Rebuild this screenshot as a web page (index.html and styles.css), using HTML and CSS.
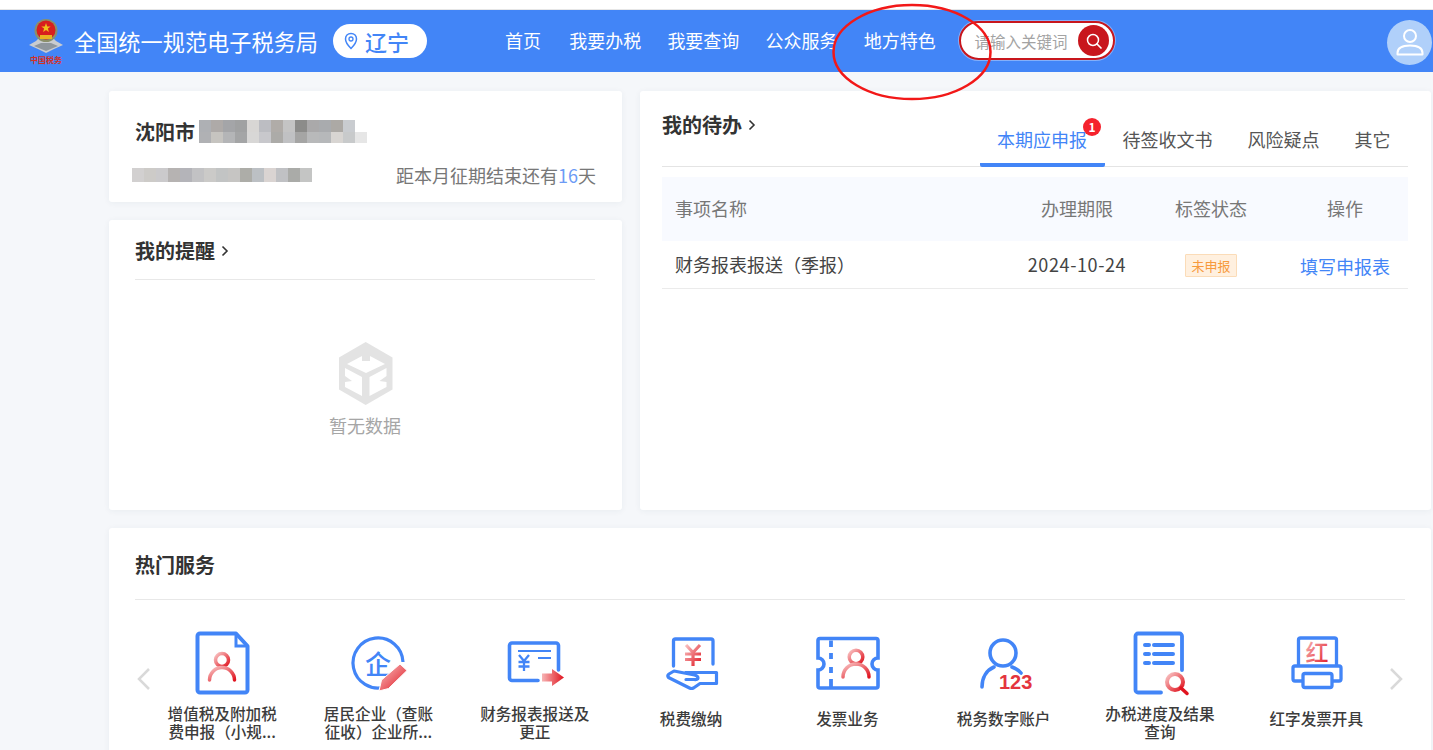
FILE: index.html
```html
<!DOCTYPE html>
<html lang="zh-CN">
<head>
<meta charset="utf-8">
<title>全国统一规范电子税务局</title>
<link rel="stylesheet" href="styles.css">
</head>
<body>
<svg class="defs" width="0" height="0" aria-hidden="true">
  <defs>
    <linearGradient id="rg" x1="0" y1="0" x2="1" y2="1">
      <stop offset="0" stop-color="#f9c5c5"/>
      <stop offset="1" stop-color="#e0141f"/>
    </linearGradient>
    <linearGradient id="rh" x1="0" y1="0" x2="1" y2="0">
      <stop offset="0" stop-color="#f7b5b5"/>
      <stop offset="1" stop-color="#e0141f"/>
    </linearGradient>
  </defs>
</svg>
<div class="topstrip"></div>
<header class="header">
  <div class="brand">
    <svg class="logo" width="40" height="50" viewBox="0 0 40 50">
      <path d="M3 28 L10 24 L14 20 H26 L30 24 L37 28 L28 32 L20 36 L12 32Z" fill="#c9ccd0"/>
      <path d="M8 29 L15 26 H25 L32 29 L20 34Z" fill="#8f969c"/>
      <circle cx="20" cy="13.500" r="11.500" fill="#8b8f6a"/>
      <circle cx="20" cy="13" r="9.500" fill="#d81e1e"/>
      <path d="M20 6 l1.200 3.400 h3.500 l-2.800 2.100 1 3.400 -2.900 -2 -2.900 2 1 -3.400 -2.800 -2.100 h3.500z" fill="#f1c21b"/>
      <rect x="14" y="18" width="12" height="4" fill="#e9b322"/>
      <text class="logo-text" x="20" y="46" text-anchor="middle">中国税务</text>
    </svg>
    <span class="site-name">全国统一规范电子税务局</span>
    <span class="region">
      <svg width="14" height="18" viewBox="0 0 14 18"><path d="M7 1.500 C3.600 1.500 1.500 4 1.500 7 C1.500 10.500 5 14.500 7 16.500 C9 14.500 12.500 10.500 12.500 7 C12.500 4 10.400 1.500 7 1.500Z" fill="none" stroke="#4285f7" stroke-width="1.500"/><circle cx="7" cy="7" r="2" fill="none" stroke="#4285f7" stroke-width="1.300"/></svg>
      <span>辽宁</span>
    </span>
  </div>
  <nav class="nav">
    <a>首页</a><a>我要办税</a><a>我要查询</a><a>公众服务</a><a>地方特色</a>
  </nav>
  <div class="search">
    <span class="placeholder">请输入关键词</span>
    <span class="search-btn">
      <svg width="20" height="20" viewBox="0 0 20 20"><circle cx="9" cy="9" r="5.500" fill="none" stroke="#fff" stroke-width="1.500"/><path d="M13 13 L17 17" stroke="#fff" stroke-width="1.700" stroke-linecap="round"/></svg>
    </span>
  </div>
  <span class="avatar">
    <svg width="30" height="32" viewBox="0 0 30 32"><circle cx="15" cy="10" r="6" fill="none" stroke="#fff" stroke-width="2"/><path d="M2.500 27 C2.500 21 9 19.500 15 19.500 C21 19.500 27.500 21 27.500 27 V28.500 H2.500Z" fill="none" stroke="#fff" stroke-width="2" stroke-linejoin="round"/></svg>
  </span>
</header>

<svg class="circle-mark" width="170" height="110" viewBox="0 0 170 110"><ellipse cx="83" cy="52" rx="78.500" ry="47" fill="none" stroke="#f21818" stroke-width="2.500"/></svg>

<main class="main">
  <div class="upper">
    <div class="left-col">
      <section class="card company">
        <div class="company-name">
          <span>沈阳市</span>
          <svg class="mosaic mosaic-name" width="184" height="24" viewBox="0 0 184 24">
            <rect x="0" y="0" width="12" height="12" fill="#aeb0b4"/><rect x="12" y="0" width="12" height="12" fill="#aeaaa8"/><rect x="24" y="0" width="12" height="12" fill="#a4a5a8"/><rect x="36" y="0" width="12" height="12" fill="#a0a1a2"/><rect x="48" y="0" width="12" height="12" fill="#d8d6d4"/><rect x="60" y="0" width="12" height="12" fill="#bcbdc2"/><rect x="72" y="0" width="12" height="12" fill="#b0aca8"/><rect x="84" y="0" width="12" height="12" fill="#c4c4c4"/><rect x="96" y="0" width="12" height="12" fill="#8c8c8a"/><rect x="108" y="0" width="12" height="12" fill="#aaa9aa"/><rect x="120" y="0" width="12" height="12" fill="#a9abae"/><rect x="132" y="0" width="12" height="12" fill="#aca9a5"/><rect x="144" y="0" width="12" height="12" fill="#c9ccd0"/>
            <rect x="0" y="12" width="12" height="11" fill="#b0b1b4"/><rect x="12" y="12" width="12" height="11" fill="#c6c4c0"/><rect x="24" y="12" width="12" height="11" fill="#b4b5b7"/><rect x="36" y="12" width="12" height="11" fill="#a4a5a6"/><rect x="48" y="12" width="12" height="11" fill="#d8d7d6"/><rect x="60" y="12" width="12" height="11" fill="#c8c8cc"/><rect x="72" y="12" width="12" height="11" fill="#acaba8"/><rect x="84" y="12" width="12" height="11" fill="#c0c1c3"/><rect x="96" y="12" width="12" height="11" fill="#a5a5a4"/><rect x="108" y="12" width="12" height="11" fill="#b8b9ba"/><rect x="120" y="12" width="12" height="11" fill="#b6b8ba"/><rect x="132" y="12" width="12" height="11" fill="#d8d5d2"/><rect x="144" y="12" width="12" height="11" fill="#c8cacb"/><rect x="156" y="12" width="12" height="11" fill="#e6e6e6"/>
          </svg>
        </div>
        <div class="company-sub">
          <svg class="mosaic" width="182" height="20" viewBox="0 0 182 20">
            <rect x="0" y="3" width="12" height="14" fill="#d2d0d0"/><rect x="12" y="3" width="12" height="14" fill="#cdcbc8"/><rect x="24" y="3" width="12" height="14" fill="#cbcacc"/><rect x="36" y="3" width="12" height="14" fill="#b6b3b2"/><rect x="48" y="3" width="12" height="14" fill="#b4b4b9"/><rect x="60" y="3" width="12" height="14" fill="#c2c2c4"/><rect x="72" y="3" width="12" height="14" fill="#cbcac8"/><rect x="84" y="3" width="12" height="14" fill="#c2c4c4"/><rect x="96" y="3" width="12" height="14" fill="#c6c5c3"/><rect x="108" y="3" width="12" height="14" fill="#adada8"/><rect x="120" y="3" width="12" height="14" fill="#bcc0c4"/><rect x="132" y="3" width="12" height="14" fill="#dad4d2"/><rect x="144" y="3" width="12" height="14" fill="#c0c1c4"/><rect x="156" y="3" width="12" height="14" fill="#aaaba8"/><rect x="168" y="3" width="12" height="14" fill="#c4c5c4"/>
          </svg>
          <span class="deadline">距本月征期结束还有<em>16</em>天</span>
        </div>
      </section>
      <section class="card reminder">
        <h2 class="title title-line">我的提醒<svg class="chev" width="10" height="14" viewBox="0 0 10 14"><path d="M2.500 2.500 L7 7 L2.500 11.500" fill="none" stroke="#333" stroke-width="1.600"/></svg></h2>
        <div class="empty">
          <svg width="56" height="64" viewBox="0 0 56 64">
            <path d="M28.700 0 L55.500 15.500 V47.500 L28.700 63 L2 47.500 V15.500Z" fill="#e3e3e3"/>
            <path d="M10 22 L25 14 V19 H33 V14 L48 22 L29 31Z" fill="#fff"/>
            <path d="M8 26 L25 35 V54 L8 45 V40 L15 39 L8 34Z" fill="#fff"/>
            <path d="M49.500 26 L32.500 35 V54 L49.500 45 V40 L42.500 39 L49.500 34Z" fill="#fff"/>
          </svg>
          <p>暂无数据</p>
        </div>
      </section>
    </div>
    <section class="card todo">
      <div class="todo-head">
        <h2 class="title">我的待办<svg class="chev" width="10" height="14" viewBox="0 0 10 14"><path d="M2.500 2.500 L7 7 L2.500 11.500" fill="none" stroke="#333" stroke-width="1.600"/></svg></h2>
        <div class="tabs">
          <span class="tab active">本期应申报<i class="badge">1</i></span>
          <span class="tab">待签收文书</span>
          <span class="tab">风险疑点</span>
          <span class="tab">其它</span>
        </div>
      </div>
      <div class="table">
        <div class="tr th"><span>事项名称</span><span class="c">办理期限</span><span class="c">标签状态</span><span class="c c-op">操作</span></div>
        <div class="tr td"><span>财务报表报送（季报）</span><span class="c date">2024-10-24</span><span class="c"><b class="tag">未申报</b></span><span class="c c-op"><a class="link">填写申报表</a></span></div>
      </div>
    </section>
  </div>

  <section class="card hot">
    <h2 class="title title-line">热门服务</h2>
    <div class="services">
      <svg class="arrow arrow-l" width="18" height="26" viewBox="0 0 18 26"><path d="M14 3 L4 13 L14 23" fill="none" stroke="#d9d9d9" stroke-width="2.500"/></svg>

      <div class="svc">
        <svg width="70" height="70" viewBox="0 0 70 70" fill="none">
          <path d="M13 5.500 H49 L60.500 18 V62 a2.500 2.500 0 0 1 -2.500 2.500 H13 a2.500 2.500 0 0 1 -2.500 -2.500 V8 a2.500 2.500 0 0 1 2.500 -2.500Z" stroke="#4285f7" stroke-width="4" stroke-linejoin="round"/>
          <path d="M49 6 V18 H60" stroke="#4285f7" stroke-width="3"/>
          <circle cx="35" cy="32" r="6.500" stroke="url(#rg)" stroke-width="3.500"/>
          <path d="M22.500 52 a12.500 12.500 0 0 1 25 0" stroke="url(#rg)" stroke-width="3.500" stroke-linecap="round"/>
        </svg>
        <p>增值税及附加税<br>费申报（小规...</p>
      </div>

      <div class="svc">
        <svg width="70" height="70" viewBox="0 0 70 70" fill="none">
          <path d="M60 34 A25 25 0 1 0 42 59" stroke="#4285f7" stroke-width="3.200"/>
          <text class="glyph glyph-blue" x="35" y="46" text-anchor="middle">企</text>
          <path d="M36 63 L38.500 52 L57 36 L64 42.500 L45.500 60.500Z" fill="url(#rg)" stroke="#fff" stroke-width="1"/>
        </svg>
        <p>居民企业（查账<br>征收）企业所...</p>
      </div>

      <div class="svc">
        <svg width="70" height="70" viewBox="0 0 70 70" fill="none">
          <path d="M58.500 42 V17.500 a2.500 2.500 0 0 0 -2.500 -2.500 H12 a2.500 2.500 0 0 0 -2.500 2.500 V50 a2.500 2.500 0 0 0 2.500 2.500 H38" stroke="#4285f7" stroke-width="3.600" stroke-linecap="round"/>
          <path d="M18 23 H51 M38 30 H51" stroke="#4285f7" stroke-width="2.200"/>
          <path d="M19 27 L24 33 L29 27 M24 33 V43 M18.500 34 H29.500 M18.500 38.500 H29.500" stroke="#4285f7" stroke-width="2.300"/>
          <path d="M42 45.500 H52 V41 L64 49.500 L52 58 V53.500 H42Z" fill="url(#rh)"/>
        </svg>
        <p>财务报表报送及<br>更正</p>
      </div>

      <div class="svc">
        <svg width="70" height="70" viewBox="0 0 70 70" fill="none">
          <path d="M17.500 38 V13 a2 2 0 0 1 2 -2 H55 a2 2 0 0 1 2 2 V36" stroke="#4285f7" stroke-width="3.300" stroke-linecap="round"/>
          <path d="M30 17 L37 24.500 L44 17 M37 24.500 V38 M29 26 H45 M29 31.500 H45" stroke="url(#rg)" stroke-width="3.200"/>
          <path d="M30 44.500 H60.500 V55.500 H44 L37.500 60 Q35.500 61 33.500 60 L12.500 49.500 Q11 47.500 13 46 L18 43 L38.500 47 Q42 48 42 50 T38 51.500 H30" stroke="#4285f7" stroke-width="3.200" stroke-linejoin="round" stroke-linecap="round"/>
        </svg>
        <p class="one">税费缴纳</p>
      </div>

      <div class="svc">
        <svg width="70" height="70" viewBox="0 0 70 70" fill="none">
          <path d="M8 10.500 H64 a2 2 0 0 1 2 2 V30 a6 6 0 0 0 0 12 V58 a2 2 0 0 1 -2 2 H8 a2 2 0 0 1 -2 -2 V42 a6 6 0 0 0 0 -12 V12.500 a2 2 0 0 1 2 -2Z" stroke="#4285f7" stroke-width="3.600"/>
          <path d="M19 12.500 V19 M19 25 V31 M19 39 V45 M19 51 V60" stroke="#4285f7" stroke-width="3.800"/>
          <circle cx="44" cy="29" r="6.800" stroke="url(#rg)" stroke-width="3.500"/>
          <path d="M31 49 a13 13 0 0 1 26 0" stroke="url(#rg)" stroke-width="3.500" stroke-linecap="round"/>
        </svg>
        <p class="one">发票业务</p>
      </div>

      <div class="svc">
        <svg width="70" height="70" viewBox="0 0 70 70" fill="none">
          <circle cx="34" cy="25" r="13" stroke="#4285f7" stroke-width="3.600"/>
          <path d="M13 59 C13 49 18 42 25 39 M43 39 C47 40.500 50 42.500 52 45" stroke="#4285f7" stroke-width="3.600" stroke-linecap="round"/>
          <text class="glyph-num" x="30" y="61">123</text>
        </svg>
        <p class="one">税务数字账户</p>
      </div>

      <div class="svc">
        <svg width="70" height="70" viewBox="0 0 70 70" fill="none">
          <path d="M57 42 V8 a2.500 2.500 0 0 0 -2.500 -2.500 H13 a2.500 2.500 0 0 0 -2.500 2.500 V62 a2.500 2.500 0 0 0 2.500 2.500 H36" stroke="#4285f7" stroke-width="3.800" stroke-linecap="round"/>
          <path d="M20 17 H24 M29 17 H48 M20 26 H24 M29 26 H48 M20 35 H24 M29 35 H48" stroke="#4285f7" stroke-width="4" stroke-linecap="round"/>
          <circle cx="50" cy="54" r="8" stroke="url(#rg)" stroke-width="4"/>
          <path d="M56 60 L62 65.500" stroke="#e0141f" stroke-width="3.500" stroke-linecap="round"/>
        </svg>
        <p>办税进度及结果<br>查询</p>
      </div>

      <div class="svc">
        <svg width="70" height="70" viewBox="0 0 70 70" fill="none">
          <path d="M17.500 38 V12 a2 2 0 0 1 2 -2 H53.500 a2 2 0 0 1 2 2 V38" stroke="#4285f7" stroke-width="3.300"/>
          <path d="M21 53 H14 a2 2 0 0 1 -2 -2 V40 a2 2 0 0 1 2 -2 H58 a2 2 0 0 1 2 2 V51 a2 2 0 0 1 -2 2 H51" stroke="#4285f7" stroke-width="3.300"/>
          <rect x="22" y="45.500" width="29" height="14" rx="2" stroke="#4285f7" stroke-width="3.300"/>
          <text class="glyph glyph-red" x="36" y="33" text-anchor="middle" fill="url(#rg)">红</text>
        </svg>
        <p class="one">红字发票开具</p>
      </div>

      <svg class="arrow arrow-r" width="18" height="26" viewBox="0 0 18 26"><path d="M4 3 L14 13 L4 23" fill="none" stroke="#d9d9d9" stroke-width="2.500"/></svg>
    </div>
  </section>
</main>
</body>
</html>
```
FILE: styles.css
```css
* { box-sizing: border-box; }
html, body { margin: 0; padding: 0; height: 750px; overflow: hidden; }
body {
  position: relative;
  background: #f5f7fa;
  color: #333;
  font-family: "Noto Sans CJK SC", "Noto Sans", sans-serif;
}
.defs { position: absolute; }
.topstrip { height: 10px; background: #fff; border-bottom: 1px solid #e6e6e6; }

.header {
  height: 62px;
  background: #4285f7;
  display: flex;
  align-items: center;
  color: #fff;
}
.brand { display: flex; align-items: center; width: 505px; padding-left: 26px; }
.logo { flex: none; margin-top: 2px; }
.logo-text { font-size: 8px; fill: #d5301f; font-weight: 700; }
.site-name { font-size: 22.200px; margin-left: 8px; line-height: 30px; white-space: nowrap; }
.region {
  margin-left: 15px;
  width: 94px;
  height: 34px;
  border-radius: 17px;
  background: #fff;
  color: #4285f7;
  font-size: 22px;
  font-weight: 500;
  display: flex;
  align-items: center;
  padding-left: 11px;
  gap: 7px;
  line-height: 1;
}
.nav { display: flex; gap: 26.200px; font-size: 18px; line-height: 24px; width: 454px; margin-top: -3px; white-space: nowrap; }
.nav a:first-child { margin-right: 2px; }
.search {
  width: 156px;
  height: 39px;
  margin-top: -1px;
  border: 2.500px solid #c8161d;
  border-radius: 20px;
  background: #fff;
  box-shadow: 0 0 0 1px rgba(255,255,255,.35);
  display: flex;
  align-items: center;
  justify-content: space-between;
  padding: 0 4px 0 13.500px;
}
.placeholder { font-size: 15.500px; color: #a3a3a3; white-space: nowrap; }
.search-btn {
  width: 31px; height: 31px; border-radius: 50%;
  background: #c8161d;
  display: flex; align-items: center; justify-content: center;
}
.avatar {
  margin-left: auto;
  margin-right: 1px;
  margin-top: 2px;
  width: 45px; height: 45px; border-radius: 50%;
  background: #b0d0fa;
  display: flex; align-items: center; justify-content: center;
}
.circle-mark { position: absolute; left: 829px; top: 0; z-index: 5; pointer-events: none; }

.main { padding: 19px 2px 0 109px; }
.upper { display: grid; grid-template-columns: 513px 791px; column-gap: 18px; }
.left-col { display: flex; flex-direction: column; gap: 18px; }
.card { background: #fff; border-radius: 3px; box-shadow: 0 1px 6px rgba(40,60,90,.06); }

.company { height: 111px; padding: 26px 26px 0; }
.company-name { display: flex; align-items: center; font-size: 20px; font-weight: 700; line-height: 30px; height: 30px; white-space: nowrap; }
.company-name span { width: 64px; flex: none; }
.mosaic { display: block; filter: blur(.6px); flex: none; }
.company-sub { display: flex; align-items: center; justify-content: space-between; margin: 14px 0 0 -3px; height: 28px; }
.deadline { font-size: 18px; color: #777; white-space: nowrap; }
.deadline em { font-style: normal; color: #6d9bf5; }

.title { margin: 0; font-size: 20px; line-height: 28px; font-weight: 700; color: #333; display: flex; align-items: center; white-space: nowrap; }
.chev { margin-left: 5px; }
.title-line { border-bottom: 1px solid #e8e8e8; }

.reminder { height: 290px; padding: 17px 27px 0 26px; }
.reminder .title-line { height: 43px; padding-bottom: 14px; }
.empty { display: flex; flex-direction: column; align-items: center; padding-top: 62px; }
.empty p { margin: 6px 0 0; font-size: 18px; line-height: 26px; color: #a6a6a6; }

.todo { padding: 20px 23px 0 22px; height: 419px; }
.todo-head { display: flex; justify-content: space-between; height: 56px; border-bottom: 1px solid #e4e4e4; }
.todo-head .title { align-self: flex-start; }
.tabs { display: flex; align-items: flex-end; }
.tab { position: relative; padding: 0 17.500px; height: 41px; font-size: 18px; line-height: 28px; color: #555; white-space: nowrap; }
.tab.active { color: #4285f7; border-bottom: 4px solid #4285f7; border-radius: 0 0 2px 2px; padding: 0 17px; margin: 0 0 -1px; width: 125px; height: 42px; }
.badge {
  position: absolute; left: 103px; top: -7px;
  width: 18px; height: 18px; border-radius: 50%;
  background: #f5222d; color: #fff;
  font-size: 12px; font-style: normal; font-weight: 700;
  line-height: 18px; text-align: center;
}
.table { margin-top: 10px; }
.tr { display: grid; grid-template-columns: 1fr 130px 138px 128px; align-items: center; padding: 0 0 2px 13px; font-size: 18px; }
.c { text-align: center; }
.c-op { padding-left: 2px; }
.th { height: 64px; background: #f8faff; color: #777; }
.td { height: 48px; border-bottom: 1px solid #ebebeb; color: #444; }
.date { letter-spacing: .6px; }
.tag {
  display: inline-block; width: 52px; height: 23px;
  background: #fff0df; border: 1px solid #fbdcb8;
  color: #f79a3c; font-size: 13px; font-weight: 400; line-height: 21px;
  border-radius: 1px; vertical-align: middle;
}
.link { color: #4285f7; position: relative; top: 2px; }

.hot { margin-top: 18px; height: 240px; padding: 23px 26px 0; }
.hot .title-line { height: 49px; padding-bottom: 21px; }
.services { position: relative; display: grid; grid-template-columns: repeat(8, 156.300px); padding: 28px 0 0 9px; }
.svc { display: flex; flex-direction: column; align-items: center; }
.svc svg { display: block; }
.svc p { margin: 6px 0 0; font-size: 15.600px; line-height: 18px; font-weight: 500; color: #3c3c3c; text-align: center; white-space: nowrap; }
.svc p.one { margin-top: 11px; }
.arrow { position: absolute; top: 66px; }
.arrow-l { left: 0; }
.arrow-r { right: 0; }
.glyph { font-size: 26px; font-weight: 500; }
.glyph-blue { fill: #4285f7; }
.glyph-red { font-size: 23px; font-weight: 500; }
.glyph-num { font-size: 20px; font-weight: 700; fill: #e4353e; font-family: "Liberation Sans", sans-serif; }
```
